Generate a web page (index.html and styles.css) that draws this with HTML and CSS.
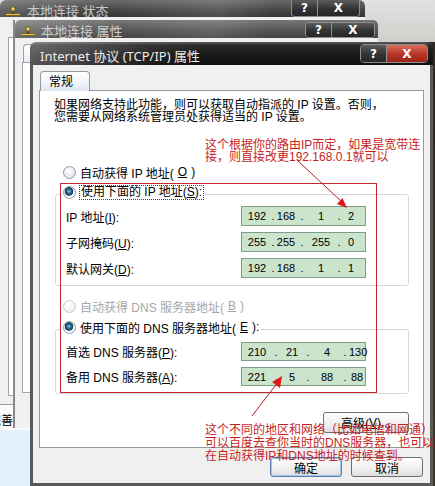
FILE: index.html
```html
<!DOCTYPE html>
<html lang="zh-CN">

<head>
    <meta charset="UTF-8">
    <meta name="viewport" content="width=device-width, initial-scale=1.0">
    <title>Internet 协议 (TCP/IP) 属性</title>
    <link rel="stylesheet" href="styles.css">
</head>

<body>
    <div class="desktop">
        <div class="behind"><span class="behind-text">完善</span></div>

        <div class="window win-status">
            <div class="titlebar">
                <svg class="net-icon" width="16" height="12" viewBox="0 0 16 12">
                    <path d="M1 9.5h14" stroke="#5a4a20" stroke-width="3"/>
                    <path d="M1 9.5h14" stroke="#e8c850" stroke-width="1.4"/>
                    <path d="M8 3v6" stroke="#5a4a20" stroke-width="2.4"/>
                    <circle cx="8" cy="4" r="2.2" fill="#f0d060" stroke="#5a4a20" stroke-width="0.8"/>
                </svg>
                <span class="title">本地连接 状态</span>
                <div class="caption-buttons">
                    <span class="cap-btn help">?</span>
                    <span class="cap-btn close">X</span>
                </div>
            </div>
            <div class="win-body">
                <div class="ghost-panel"></div>
            </div>
        </div>

        <div class="window win-props">
            <div class="titlebar">
                <svg class="net-icon" width="16" height="12" viewBox="0 0 16 12">
                    <path d="M1 9.5h14" stroke="#5a4a20" stroke-width="3"/>
                    <path d="M1 9.5h14" stroke="#e8c850" stroke-width="1.4"/>
                    <path d="M8 3v6" stroke="#5a4a20" stroke-width="2.4"/>
                    <circle cx="8" cy="4" r="2.2" fill="#f0d060" stroke="#5a4a20" stroke-width="0.8"/>
                </svg>
                <span class="title">本地连接 属性</span>
                <div class="caption-buttons">
                    <span class="cap-btn help">?</span>
                    <span class="cap-btn close">X</span>
                </div>
            </div>
            <div class="win-body">
                <span class="ghost-tab"></span>
                <div class="ghost-panel"></div>
            </div>
        </div>

        <div class="window win-tcpip">
            <div class="titlebar">
                <span class="title">Internet 协议 (TCP/IP) 属性</span>
                <div class="caption-buttons">
                    <span class="cap-btn help">?</span>
                    <span class="cap-btn close red">X</span>
                </div>
            </div>
            <div class="win-body">
                <div class="tabs"><span class="tab">常规</span></div>
                <div class="panel">
                    <p class="intro">如果网络支持此功能，则可以获取自动指派的 IP 设置。否则，<br>您需要从网络系统管理员处获得适当的 IP 设置。</p>

                    <div class="radio-row auto-ip"><span class="radio"></span>自动获得 IP 地址(<u>O</u>)</div>

                    <div class="group ip-group">
                        <div class="radio-row legend"><span class="radio checked"></span><span class="focus">使用下面的 IP 地址(<u>S</u>):</span></div>
                        <div class="field-row first">
                            <span class="label">IP 地址(<u>I</u>):</span>
                            <span class="ip"><span class="n1">192</span><span class="d1">.</span><span class="n2">168</span><span class="d2">.</span><span class="n3">1</span><span class="d3">.</span><span class="n4">2</span></span>
                        </div>
                        <div class="field-row">
                            <span class="label">子网掩码(<u>U</u>):</span>
                            <span class="ip"><span class="n1">255</span><span class="d1">.</span><span class="n2">255</span><span class="d2">.</span><span class="n3">255</span><span class="d3">.</span><span class="n4">0</span></span>
                        </div>
                        <div class="field-row">
                            <span class="label">默认网关(<u>D</u>):</span>
                            <span class="ip"><span class="n1">192</span><span class="d1">.</span><span class="n2">168</span><span class="d2">.</span><span class="n3">1</span><span class="d3">.</span><span class="n4">1</span></span>
                        </div>
                    </div>

                    <div class="radio-row auto-dns disabled"><span class="radio"></span>自动获得 DNS 服务器地址(<u>B</u>)</div>

                    <div class="group dns-group">
                        <div class="radio-row legend"><span class="radio checked"></span>使用下面的 DNS 服务器地址(<u>E</u>):</div>
                        <div class="field-row first">
                            <span class="label">首选 DNS 服务器(<u>P</u>):</span>
                            <span class="ip"><span class="n1">210</span><span class="d1 wide">.</span><span class="n2">21</span><span class="d2">.</span><span class="n3">4</span><span class="d3">.</span><span class="n4">130</span></span>
                        </div>
                        <div class="field-row">
                            <span class="label">备用 DNS 服务器(<u>A</u>):</span>
                            <span class="ip"><span class="n1">221</span><span class="d1 wide">.</span><span class="n2">5</span><span class="d2">.</span><span class="n3">88</span><span class="d3">.</span><span class="n4">88</span></span>
                        </div>
                    </div>

                    <div class="advanced-row"><span class="btn advanced">高级(<u>V</u>)...</span></div>
                </div>
                <div class="dialog-buttons">
                    <span class="btn default">确定</span>
                    <span class="btn">取消</span>
                </div>
            </div>
        </div>

        <div class="mark-box"></div>
        <p class="note note-top">这个根据你的路由IP而定，如果是宽带连<br>接，则直接改更192.168.0.1就可以</p>
        <p class="note note-bottom">这个不同的地区和网络（比如电信和网通）<br>可以百度去查你当时的DNS服务器，也可以<br>在自动获得IP和DNS地址的时候查到。</p>

        <svg class="arrows" width="435" height="486" viewBox="0 0 435 486">
            <path d="M297 160L342 202" stroke="#b02020" stroke-width="1"/>
            <polygon points="347,208 337,204 342.5,198" fill="#e01818"/>
            <path d="M252 416L278 382" stroke="#b02020" stroke-width="1"/>
            <polygon points="282,376 280,388 272,382" fill="#e01818"/>
        </svg>
    </div>
</body>

</html>
```

FILE: styles.css
```css
* {
    box-sizing: border-box;
}

body {
    margin: 0;
    width: 435px;
    height: 486px;
    overflow: hidden;
    font-family: "Liberation Sans", "Noto Sans CJK SC", sans-serif;
    font-size: 12px;
    color: #000;
    text-autospace: no-autospace;
}

p {
    margin: 0;
}

u {
    text-underline-offset: 1px;
}

.desktop {
    position: relative;
    width: 435px;
    height: 486px;
    overflow: hidden;
    background: linear-gradient(#e2e2e0 0, #cfcfcc 42px, #2d2a25 42px, #3c352a 100%);
}

.behind {
    position: absolute;
    left: 0;
    top: 405px;
    width: 40px;
    height: 81px;
    background: linear-gradient(#fbfbfb 0, #fbfbfb 25px, #e2f1fb 25px);
}

.behind-text {
    position: absolute;
    left: -11px;
    top: 10px;
    line-height: 13px;
}

/* windows */
.window {
    position: absolute;
    display: flex;
    flex-direction: column;
}

.titlebar {
    display: flex;
    align-items: flex-start;
    flex-shrink: 0;
    border-radius: 6px 6px 0 0;
}

.title {
    line-height: 16px;
    font-family: "Noto Sans", "Noto Sans CJK SC", sans-serif;
    font-size: 13px;
    white-space: nowrap;
}

.net-icon {
    flex-shrink: 0;
}

.caption-buttons {
    display: flex;
    margin-left: auto;
    border: 1px solid #8e8e8e;
    border-top: 0;
    border-radius: 0 0 4px 4px;
    overflow: hidden;
}

.cap-btn {
    display: flex;
    align-items: center;
    justify-content: center;
    color: #fff;
    font-family: "DejaVu Sans", sans-serif;
    font-weight: bold;
    font-size: 12px;
    background: linear-gradient(#5c5c5c, #333 55%, #262626);
}

.cap-btn.close {
    border-left: 1px solid #8e8e8e;
}

.cap-btn.red {
    background: linear-gradient(#d9705f, #b93a28 50%, #9c2414);
}

.win-body {
    flex: 1;
    background: #f0f0f0;
}

.ghost-panel {
    background: #fff;
    border: 1px solid #9aa4a8;
}

/* 本地连接 状态 */
.win-status {
    left: 0;
    top: 0;
    width: 365px;
    height: 405px;
    border-bottom: 1px solid #9a9a9a;
}

.win-status .titlebar {
    height: 17px;
    padding-left: 5px;
    background: linear-gradient(100deg, rgba(255, 255, 255, 0.18) 0, rgba(255, 255, 255, 0) 30%, rgba(255, 255, 255, 0.12) 60%, rgba(255, 255, 255, 0) 75%), linear-gradient(#6a6a6a, #454545 60%, #353535);
}

.win-status .net-icon {
    margin-top: 5px;
}

.win-status .title {
    margin: 3px 0 0 6px;
    color: #c8c8c8;
}

.win-status .caption-buttons {
    margin-right: 5px;
}

.win-status .cap-btn {
    height: 16px;
}

.win-status .help {
    width: 25px;
}

.win-status .close {
    width: 42px;
}

.win-status .win-body {
    padding: 20px 0 8px 8px;
}

.win-status .ghost-panel {
    height: 100%;
}

/* 本地连接 属性 */
.win-props {
    left: 13px;
    top: 20px;
    width: 365px;
    height: 408px;
    border-left: 2px solid #8a8a8a;
}

.win-props .titlebar {
    height: 18px;
    padding-left: 5px;
    border-radius: 5px 5px 0 0;
    background: linear-gradient(100deg, rgba(255, 255, 255, 0.22) 0, rgba(255, 255, 255, 0) 30%, rgba(255, 255, 255, 0.1) 55%, rgba(255, 255, 255, 0) 70%), linear-gradient(#777, #545454 60%, #444);
}

.win-props .net-icon {
    margin-top: 5px;
}

.win-props .title {
    margin: 3px 0 0 5px;
    color: #cfcfcf;
}

.win-props .caption-buttons {
    margin-top: 2px;
    margin-right: 3px;
    border-top: 1px solid #8e8e8e;
    border-radius: 4px;
}

.win-props .cap-btn {
    height: 14px;
}

.win-props .help {
    width: 25px;
}

.win-props .close {
    width: 43px;
}

.win-props .win-body {
    display: flex;
    flex-direction: column;
    padding: 6px 0 35px 7px;
}

.win-props .ghost-tab {
    width: 40px;
    height: 19px;
    margin-left: 1px;
    border: 1px solid #9aa4a8;
    border-bottom: 0;
    border-radius: 4px 4px 0 0;
    background: linear-gradient(#fff, #e8edf6);
}

.win-props .ghost-panel {
    flex: 1;
    margin-top: -1px;
}

/* Internet 协议 (TCP/IP) 属性 */
.win-tcpip {
    left: 30px;
    top: 42px;
    width: 403px;
    height: 444px;
}

.win-tcpip .titlebar {
    height: 23px;
    padding-left: 10px;
    background: linear-gradient(100deg, rgba(255, 255, 255, 0.3) 0, rgba(255, 255, 255, 0.05) 30%, rgba(255, 255, 255, 0) 45%), linear-gradient(#5e5e5e, #2a2a2a 3px, #181818 60%, #0e0e0e);
}

.win-tcpip .title {
    margin-top: 6px;
    color: #ececec;
}

.win-tcpip .caption-buttons {
    margin-top: 2px;
    margin-right: 5px;
    border-top: 1px solid #8e8e8e;
    border-radius: 4px;
}

.win-tcpip .cap-btn {
    height: 17px;
}

.win-tcpip .help {
    width: 25px;
}

.win-tcpip .close {
    width: 41px;
}

.win-tcpip .win-body {
    display: flex;
    flex-direction: column;
    padding: 6px 6px 0;
    border: 3px solid #5a5a5a;
    border-top: 0;
}

.tabs {
    display: flex;
    height: 20px;
    padding-left: 1px;
    position: relative;
    z-index: 1;
}

.tab {
    width: 50px;
    height: 20px;
    padding: 2px 0 0 8px;
    line-height: 16px;
    border: 1px solid #919b9c;
    border-bottom: 0;
    border-radius: 4px 4px 0 0;
    background: linear-gradient(#fff, #f4f6fa 50%, #dde5f3);
}

.panel {
    display: flex;
    flex-direction: column;
    align-items: flex-start;
    height: 358px;
    margin-top: -1px;
    background: #fff;
    border: 1px solid #919b9c;
}

.intro {
    margin: 8px 0 0 14px;
    line-height: 12px;
    white-space: nowrap;
}

.radio-row {
    display: flex;
    align-items: center;
    gap: 4px;
    height: 16px;
    white-space: nowrap;
}

.radio {
    width: 13px;
    height: 13px;
    border-radius: 50%;
    border: 1px solid #8f9aa4;
    background: radial-gradient(circle at 40% 35%, #fff, #e4e6ea 70%, #cdd1d6);
    flex-shrink: 0;
}

.radio.checked {
    background: radial-gradient(circle at 45% 40%, #9fd0e8 0, #2b6c8e 2px, #173e5c 4px, #dfe3e8 4.5px, #fff 6px);
}

.disabled {
    color: #a6a6a6;
}

.disabled .radio {
    border-color: #c8ccd0;
    background: radial-gradient(circle at 40% 35%, #fff, #f0f0f0 70%, #e2e2e2);
}

.auto-ip {
    margin: 41px 0 0 23px;
}

.auto-dns {
    margin: 12px 0 0 23px;
}

.focus {
    outline: 1px dotted #444;
    padding: 0 1px;
    line-height: 13px;
}

.group {
    display: flex;
    flex-direction: column;
    width: 354px;
    margin-left: 15px;
    padding: 0 0 7px 10px;
    border: 1px solid #d4d8dc;
    border-radius: 3px;
}

.ip-group {
    margin-top: 14px;
}

.dns-group {
    margin-top: 15px;
    padding-bottom: 7px;
}

.group .legend {
    align-self: flex-start;
    margin: -11px 0 0 -5px;
    padding: 0 2px;
    background: #fff;
}

.field-row {
    display: flex;
    align-items: center;
    margin-top: 6px;
}

.field-row.first {
    margin-top: 6px;
}

.dns-group .field-row.first {
    margin-top: 7px;
}

.label {
    width: 175px;
    white-space: nowrap;
}

.ip {
    display: flex;
    align-items: center;
    width: 125px;
    height: 20px;
    padding-left: 1px;
    border: 1px solid #7e9c88;
    background: #cbe5cd;
    font-size: 11px;
}

.dns-group .ip {
    height: 19px;
}

.ip span {
    text-align: center;
}

.n1 {
    width: 28px;
}

.d1 {
    width: 4px;
}

.d1.wide {
    width: 10px;
}

.n2 {
    width: 22px;
}

.d2 {
    width: 10px;
}

.n3 {
    width: 28px;
}

.d3 {
    width: 8px;
}

.n4 {
    width: 16px;
}

.advanced-row {
    display: flex;
    justify-content: flex-end;
    width: 100%;
    margin-top: 18px;
    padding-right: 14px;
}

.btn {
    display: flex;
    align-items: center;
    justify-content: center;
    width: 72px;
    height: 20px;
    border: 1px solid #707070;
    border-radius: 3px;
    background: linear-gradient(#fff, #f2f2f2 50%, #dedede);
    white-space: nowrap;
}

.btn.advanced {
    width: 86px;
    height: 21px;
}

.btn.default {
    border-color: #5a7fa8;
    box-shadow: inset 0 0 0 1px #9cc8f0;
}

.dialog-buttons {
    display: flex;
    justify-content: flex-end;
    gap: 9px;
    margin-top: 9px;
    padding-right: 1px;
}

/* annotations drawn over the dialog */
.mark-box {
    position: absolute;
    left: 60px;
    top: 183px;
    width: 317px;
    height: 210px;
    border: 1px solid #c8282c;
}

.note {
    position: absolute;
    left: 205px;
    color: #c81e1e;
    white-space: nowrap;
}

.note-top {
    top: 139px;
    line-height: 12px;
}

.note-bottom {
    top: 424px;
    line-height: 13px;
}

.arrows {
    position: absolute;
    left: 0;
    top: 0;
    pointer-events: none;
}
```
